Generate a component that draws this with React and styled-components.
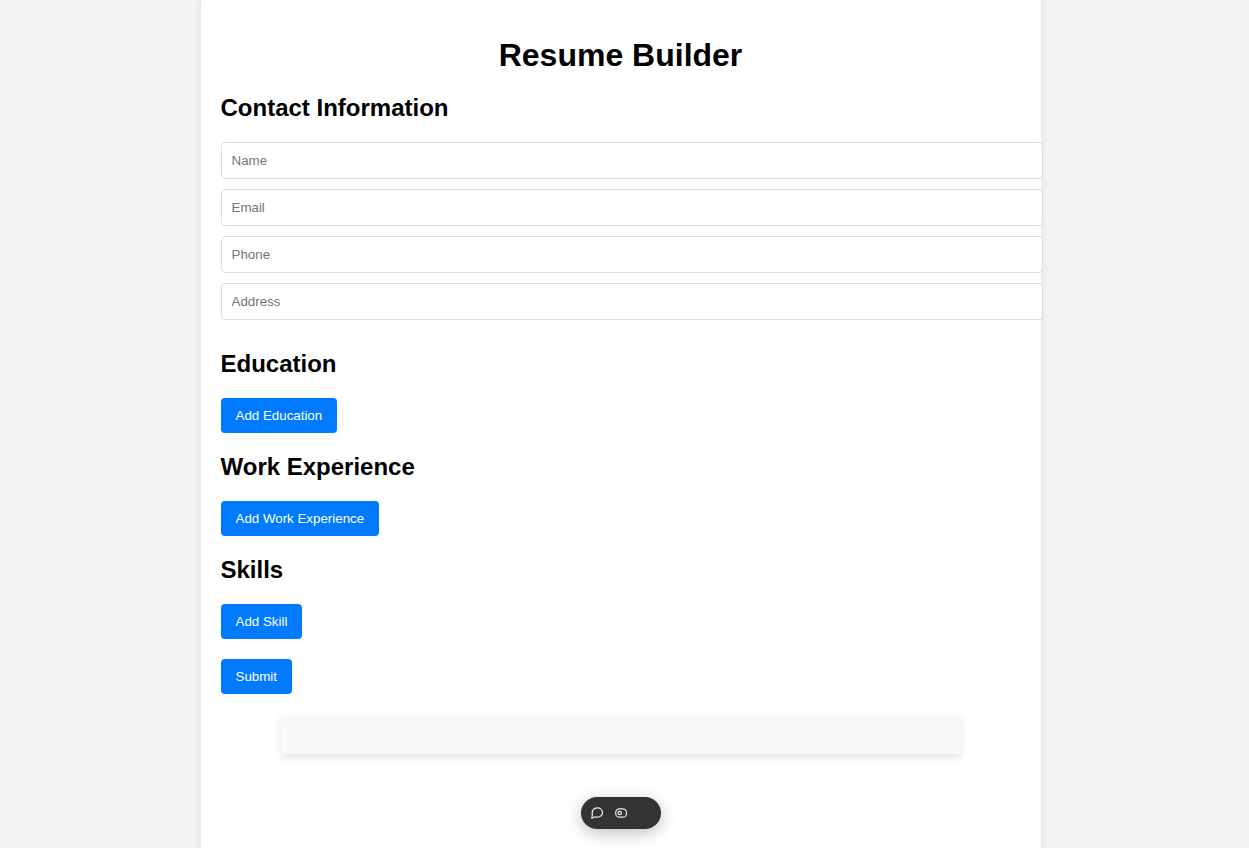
import React from "react";
import styled, { createGlobalStyle } from "styled-components";

const GlobalStyle = createGlobalStyle`
  html { background: #f4f4f4; overflow: hidden auto; scrollbar-width: none; }
  body {
    margin: 0;
    padding: 0 8px 0 0;
    font-family: "Liberation Sans", Arial, sans-serif;
    color: #000;
  }
`;

const Card = styled.main`
  max-width: 800px;
  min-height: 100vh;
  margin: -4px auto 0;
  padding: 20px;
  background: #fff;
  border-radius: 8px;
  box-shadow: 0 0 10px rgba(0, 0, 0, 0.1);
`;

const Title = styled.h1`
  margin: 20px 0;
  font-size: 32px;
  line-height: 38px;
  text-align: center;
`;

const Heading = styled.h2`
  margin: 0 0 20px;
  font-size: 24px;
  line-height: 28px;
`;

const Section = styled.section`
  margin-bottom: 20px;
`;

const Fields = styled.div`
  margin-bottom: 30px;
`;

const Field = styled.input`
  display: block;
  width: 100%;
  margin-bottom: 10px;
  padding: 10px;
  border: 1px solid #ddd;
  border-radius: 4px;
  font-family: inherit;
  line-height: 15px;
  &::placeholder { color: #757575; }
`;

const Button = styled.button`
  display: block;
  padding: 10px 15px;
  border: 0;
  border-radius: 4px;
  background: #007bff;
  color: #fff;
  font-family: inherit;
  line-height: 15px;
  cursor: pointer;
`;

const Preview = styled.div`
  max-width: 640px;
  margin: 20px auto;
  padding: 20px;
  background: #f9f9f9;
  box-shadow: 0 4px 8px rgba(0, 0, 0, 0.1);
`;

const Toolbar = styled.div`
  position: fixed;
  bottom: 19px;
  left: 50%;
  transform: translateX(-44px);
  display: flex;
  align-items: center;
  gap: 8px;
  width: 80px;
  height: 32px;
  padding-left: 8px;
  box-sizing: border-box;
  border-radius: 16px;
  background: #333;
  box-shadow: 0 4px 16px rgba(0, 0, 0, 0.25);
`;

const IconButton = styled.button`
  display: grid;
  place-items: center;
  width: 16px;
  height: 16px;
  padding: 0;
  border: 0;
  background: none;
  color: #eee;
`;

const sections = [
  { title: "Education", action: "Add Education" },
  { title: "Work Experience", action: "Add Work Experience" },
  { title: "Skills", action: "Add Skill" },
];

export default function App() {
  return (
    <>
      <GlobalStyle />
      <Card>
        <Title>Resume Builder</Title>
        <form onSubmit={(e) => e.preventDefault()}>
          <Heading>Contact Information</Heading>
          <Fields>
            {["Name", "Email", "Phone", "Address"].map((name) => (
              <Field key={name} placeholder={name} aria-label={name} />
            ))}
          </Fields>
          {sections.map(({ title, action }) => (
            <Section key={title}>
              <Heading>{title}</Heading>
              <Button type="button">{action}</Button>
            </Section>
          ))}
          <Button type="submit">Submit</Button>
        </form>
        <Preview />
      </Card>
      <Toolbar>
        <IconButton type="button" aria-label="Comment">
          <svg width="16" height="16" viewBox="0 0 16 16" fill="none" stroke="currentColor" strokeWidth="1.2" strokeLinejoin="round">
            <path d="M2.8 13.3 3.3 10C2.3 6.1 4.6 2.8 8.3 2.8c3 0 5.2 2 5.2 4.7s-2.2 4.7-5.2 4.7c-.7 0-1.4-.1-2-.4Z" />
          </svg>
        </IconButton>
        <IconButton type="button" aria-label="View">
          <svg width="16" height="16" viewBox="0 0 16 16" fill="none" stroke="currentColor" strokeWidth="1.2">
            <rect x="2.7" y="3.8" width="10.8" height="8.4" rx="3.8" />
            <circle cx="6.7" cy="8" r="1.7" />
          </svg>
        </IconButton>
      </Toolbar>
    </>
  );
}
